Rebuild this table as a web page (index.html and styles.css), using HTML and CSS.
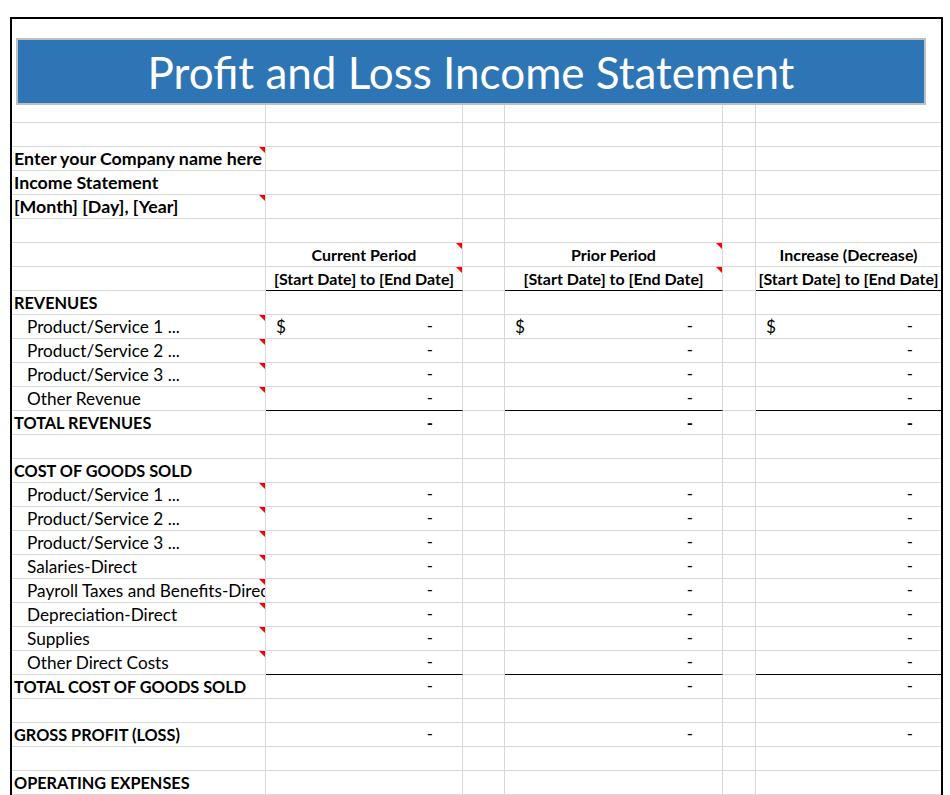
FILE: index.html
```html
<!DOCTYPE html>
<html>
<head>
<meta charset="utf-8">
<link rel="stylesheet" href="styles.css">
</head>
<body>
<div class="sheet">
  <div class="top">
    <div class="banner">Profit and Loss Income Statement</div>
  </div>

  <div class="row short"><div class="c"></div><div class="c"></div><div class="c"></div><div class="c"></div><div class="c"></div><div class="c"></div></div>
  <div class="row"><div class="c"></div><div class="c"></div><div class="c"></div><div class="c"></div><div class="c"></div><div class="c"></div></div>
  <div class="row"><div class="c b lbl big cm">Enter your Company name here</div><div class="c"></div><div class="c"></div><div class="c"></div><div class="c"></div><div class="c"></div></div>
  <div class="row"><div class="c b lbl big">Income Statement</div><div class="c"></div><div class="c"></div><div class="c"></div><div class="c"></div><div class="c"></div></div>
  <div class="row"><div class="c b lbl big cm">[Month] [Day], [Year]</div><div class="c"></div><div class="c"></div><div class="c"></div><div class="c"></div><div class="c"></div></div>
  <div class="row"><div class="c"></div><div class="c"></div><div class="c"></div><div class="c"></div><div class="c"></div><div class="c"></div></div>

  <div class="row"><div class="c"></div><div class="c b ctr cm">Current Period</div><div class="c"></div><div class="c b ctr cm">Prior Period</div><div class="c"></div><div class="c b ctr">Increase (Decrease)</div></div>
  <div class="row"><div class="c"></div><div class="c b ctr cm ul">[Start Date] to [End Date]</div><div class="c"></div><div class="c b ctr cm ul">[Start Date] to [End Date]</div><div class="c"></div><div class="c b ctr ul">[Start Date] to [End Date]</div></div>

  <div class="row"><div class="c b lbl">REVENUES</div><div class="c"></div><div class="c"></div><div class="c"></div><div class="c"></div><div class="c"></div></div>
  <div class="row"><div class="c item cm">Product/Service 1 ...</div><div class="c v"><span class="cur">$</span>-</div><div class="c"></div><div class="c v"><span class="cur">$</span>-</div><div class="c"></div><div class="c v vf"><span class="cur">$</span>-</div></div>
  <div class="row"><div class="c item cm">Product/Service 2 ...</div><div class="c v">-</div><div class="c"></div><div class="c v">-</div><div class="c"></div><div class="c v vf">-</div></div>
  <div class="row"><div class="c item cm">Product/Service 3 ...</div><div class="c v">-</div><div class="c"></div><div class="c v">-</div><div class="c"></div><div class="c v vf">-</div></div>
  <div class="row"><div class="c item cm">Other Revenue</div><div class="c v ul">-</div><div class="c"></div><div class="c v ul">-</div><div class="c"></div><div class="c v vf ul">-</div></div>
  <div class="row"><div class="c b lbl">TOTAL REVENUES</div><div class="c v b">-</div><div class="c"></div><div class="c v b">-</div><div class="c"></div><div class="c v vf b">-</div></div>
  <div class="row"><div class="c"></div><div class="c"></div><div class="c"></div><div class="c"></div><div class="c"></div><div class="c"></div></div>

  <div class="row"><div class="c b lbl">COST OF GOODS SOLD</div><div class="c"></div><div class="c"></div><div class="c"></div><div class="c"></div><div class="c"></div></div>
  <div class="row"><div class="c item cm">Product/Service 1 ...</div><div class="c v">-</div><div class="c"></div><div class="c v">-</div><div class="c"></div><div class="c v vf">-</div></div>
  <div class="row"><div class="c item cm">Product/Service 2 ...</div><div class="c v">-</div><div class="c"></div><div class="c v">-</div><div class="c"></div><div class="c v vf">-</div></div>
  <div class="row"><div class="c item cm">Product/Service 3 ...</div><div class="c v">-</div><div class="c"></div><div class="c v">-</div><div class="c"></div><div class="c v vf">-</div></div>
  <div class="row"><div class="c item cm">Salaries-Direct</div><div class="c v">-</div><div class="c"></div><div class="c v">-</div><div class="c"></div><div class="c v vf">-</div></div>
  <div class="row"><div class="c item cm">Payroll Taxes and Benefits-Direct</div><div class="c v">-</div><div class="c"></div><div class="c v">-</div><div class="c"></div><div class="c v vf">-</div></div>
  <div class="row"><div class="c item cm">Depreciation-Direct</div><div class="c v">-</div><div class="c"></div><div class="c v">-</div><div class="c"></div><div class="c v vf">-</div></div>
  <div class="row"><div class="c item cm">Supplies</div><div class="c v">-</div><div class="c"></div><div class="c v">-</div><div class="c"></div><div class="c v vf">-</div></div>
  <div class="row"><div class="c item cm">Other Direct Costs</div><div class="c v ul">-</div><div class="c"></div><div class="c v ul">-</div><div class="c"></div><div class="c v vf ul">-</div></div>
  <div class="row"><div class="c b lbl">TOTAL COST OF GOODS SOLD</div><div class="c v">-</div><div class="c"></div><div class="c v">-</div><div class="c"></div><div class="c v vf">-</div></div>
  <div class="row"><div class="c"></div><div class="c"></div><div class="c"></div><div class="c"></div><div class="c"></div><div class="c"></div></div>

  <div class="row"><div class="c b lbl">GROSS PROFIT (LOSS)</div><div class="c v">-</div><div class="c"></div><div class="c v">-</div><div class="c"></div><div class="c v vf">-</div></div>
  <div class="row"><div class="c"></div><div class="c"></div><div class="c"></div><div class="c"></div><div class="c"></div><div class="c"></div></div>
  <div class="row"><div class="c b lbl">OPERATING EXPENSES</div><div class="c"></div><div class="c"></div><div class="c"></div><div class="c"></div><div class="c"></div></div>
  <div class="row"><div class="c"></div><div class="c"></div><div class="c"></div><div class="c"></div><div class="c"></div><div class="c"></div></div>
</div>
</body>
</html>
```

FILE: styles.css
```css
html, body {
  margin: 0;
  padding: 0;
  background: #ffffff;
}

body {
  font-family: "Lato", "Liberation Sans", sans-serif;
  color: #000000;
  overflow: hidden;
}

.sheet {
  margin: 17px 0 0 10px;
  width: 933px;
  box-sizing: border-box;
  border: 2px solid #000000;
  border-bottom: none;
}

.top {
  height: 86px;
  padding: 19px 0 0 4px;
  box-sizing: border-box;
}

.banner {
  width: 910px;
  height: 67px;
  box-sizing: border-box;
  background: #2e75b6;
  border: 2px solid #bfbfbf;
  color: #ffffff;
  font-size: 44px;
  display: flex;
  align-items: center;
  justify-content: center;
  padding-top: 1px;
  white-space: nowrap;
}

.row {
  display: grid;
  grid-template-columns: 254px 197px 42px 218px 33px 185px;
  height: 24px;
}

.row.short {
  height: 18px;
}

.c {
  position: relative;
  box-sizing: border-box;
  border-right: 1px solid #d9d9d9;
  border-bottom: 1px solid #d9d9d9;
  overflow: hidden;
  white-space: nowrap;
  font-size: 17.2px;
  line-height: 23px;
}

.c:last-child {
  border-right: none;
}

.b {
  font-weight: 700;
  font-size: 16.3px;
  line-height: 24px;
}

.lbl {
  padding-left: 2px;
}

.lbl.big {
  font-size: 17.8px;
  line-height: 23px;
}

.item {
  padding-left: 15px;
}

.ctr {
  text-align: center;
  font-size: 16px;
  line-height: 23px;
  overflow: visible;
}

.ul {
  border-bottom-color: #000000;
}

.v {
  display: flex;
  justify-content: flex-end;
  padding-right: 29px;
  font-size: 16.5px;
}

.v.vf {
  padding-right: 28px;
}

.cur {
  margin-right: auto;
  padding-left: 10px;
  font-weight: 400;
  font-size: 17.2px;
}

.cm::after {
  content: "";
  position: absolute;
  top: 0;
  right: 0;
  width: 0;
  height: 0;
  border-top: 6px solid #ff0000;
  border-left: 6px solid transparent;
}
```
